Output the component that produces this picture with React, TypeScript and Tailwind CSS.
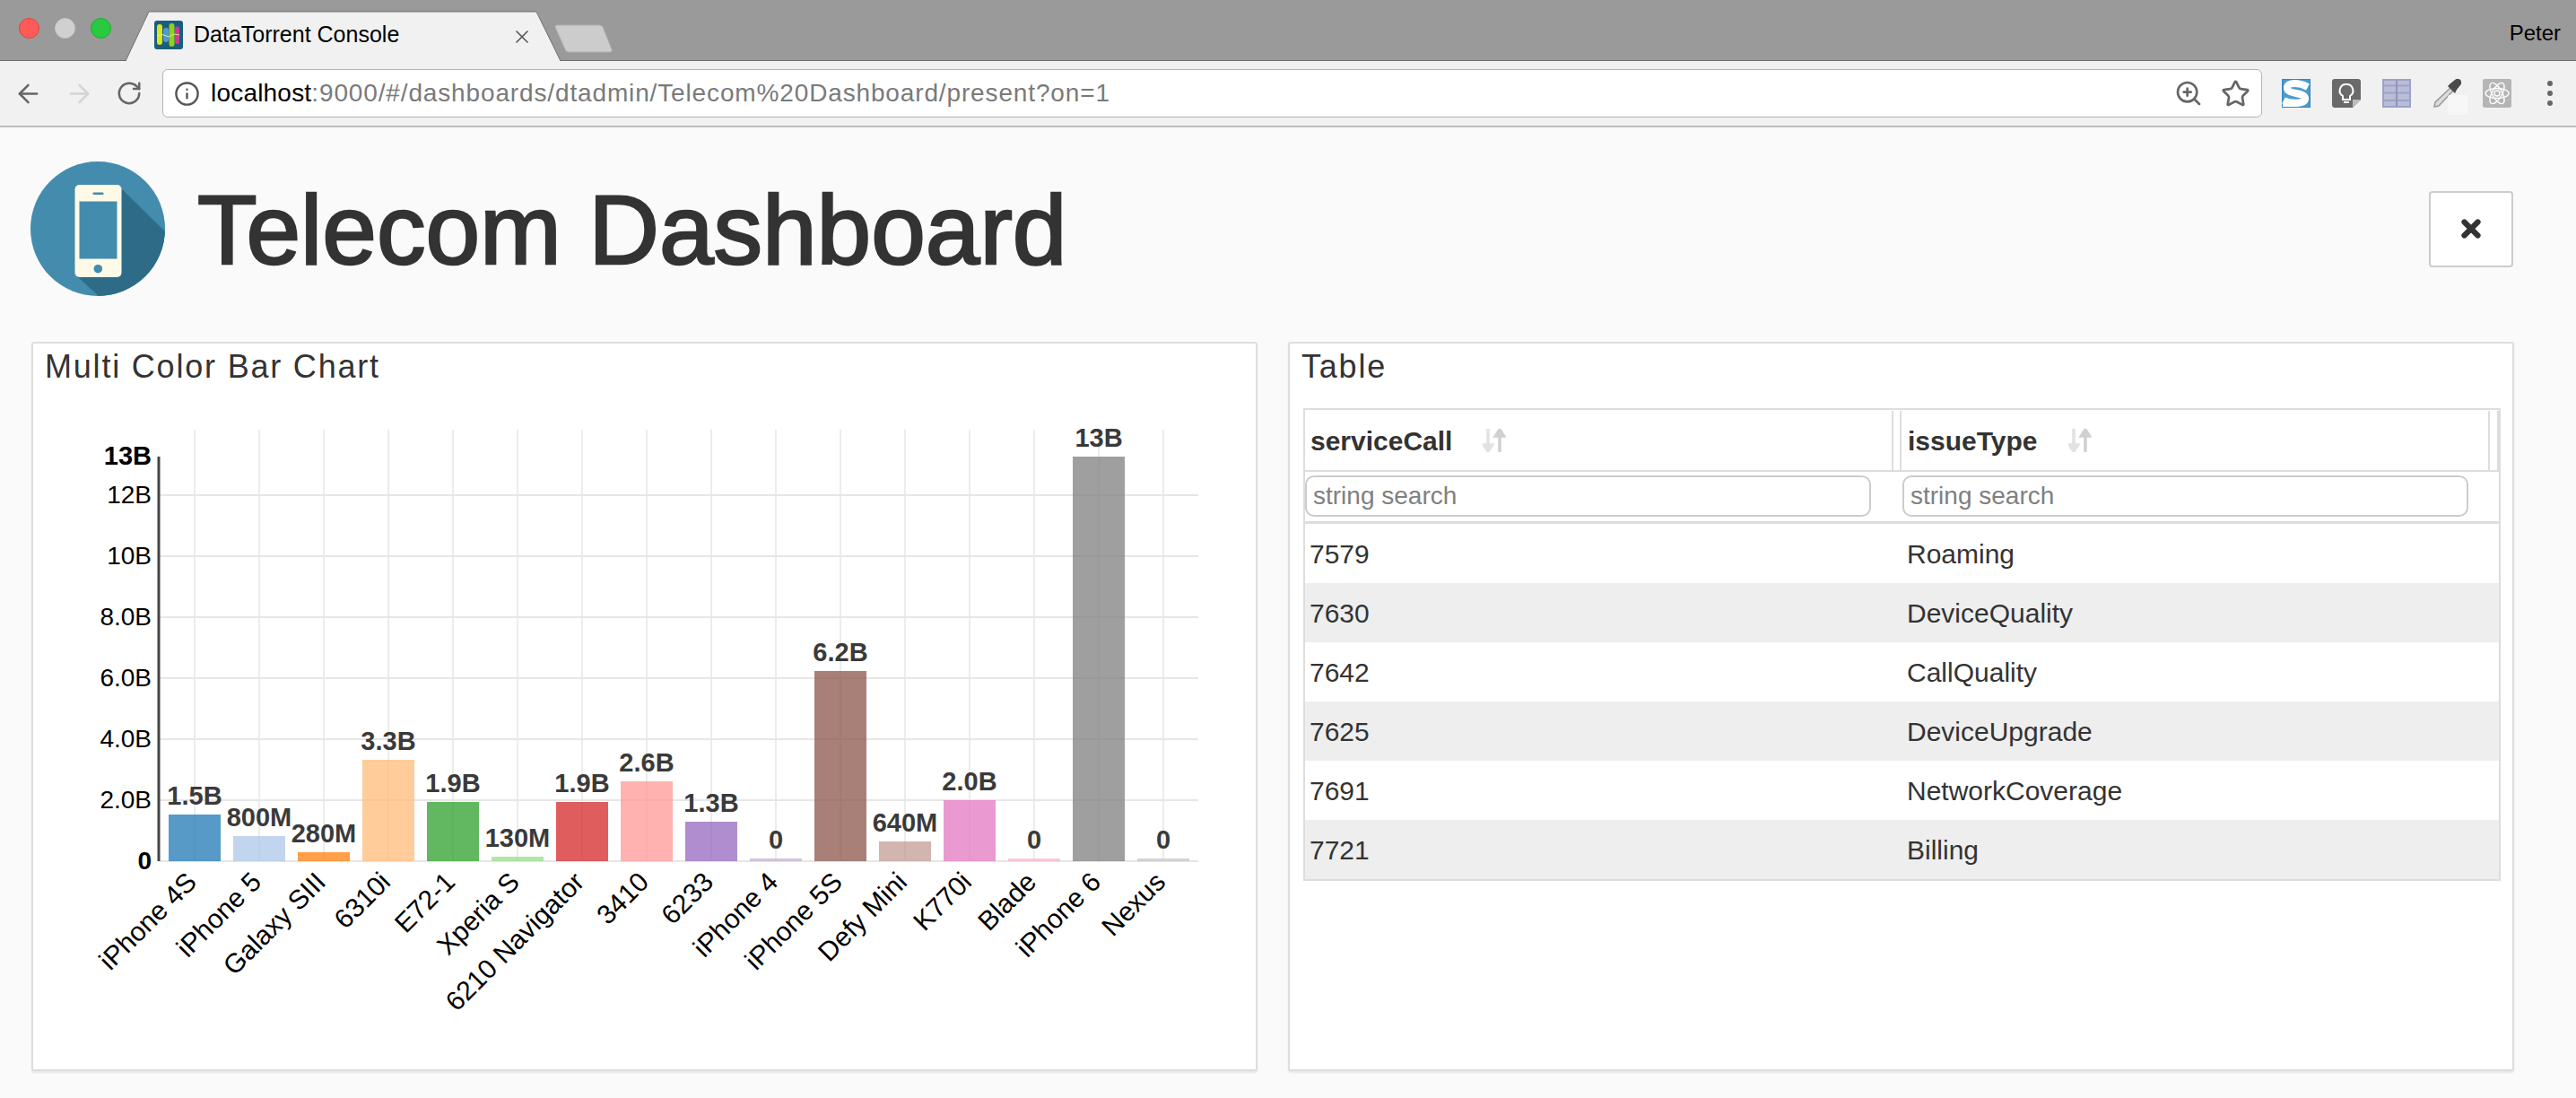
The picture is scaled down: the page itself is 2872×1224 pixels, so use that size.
import React from "react";
import { ArrowLeft, ArrowRight, RotateCw, ZoomIn, Star, Info, X } from "lucide-react";

const bars = [
  { name: "iPhone 4S", label: "1.5B", top: 908, color: "#1f77b4" },
  { name: "iPhone 5", label: "800M", top: 932, color: "#aec7e8" },
  { name: "Galaxy SIII", label: "280M", top: 950, color: "#ff7f0e" },
  { name: "6310i", label: "3.3B", top: 847, color: "#ffbb78" },
  { name: "E72-1", label: "1.9B", top: 894, color: "#2ca02c" },
  { name: "Xperia S", label: "130M", top: 955, color: "#98df8a" },
  { name: "6210 Navigator", label: "1.9B", top: 894, color: "#d62728" },
  { name: "3410", label: "2.6B", top: 871, color: "#ff9896" },
  { name: "6233", label: "1.3B", top: 916, color: "#9467bd" },
  { name: "iPhone 4", label: "0", top: 957, color: "#c5b0d5" },
  { name: "iPhone 5S", label: "6.2B", top: 748, color: "#8c564b" },
  { name: "Defy Mini", label: "640M", top: 938, color: "#c49c94" },
  { name: "K770i", label: "2.0B", top: 892, color: "#e377c2" },
  { name: "Blade", label: "0", top: 957, color: "#f7b6d2" },
  { name: "iPhone 6", label: "13B", top: 509, color: "#7f7f7f" },
  { name: "Nexus", label: "0", top: 957, color: "#c7c7c7" },
];

const yTicks = [
  { label: "12B", y: 552 },
  { label: "10B", y: 620 },
  { label: "8.0B", y: 688 },
  { label: "6.0B", y: 756 },
  { label: "4.0B", y: 824 },
  { label: "2.0B", y: 892 },
];

const rows = [
  ["7579", "Roaming"],
  ["7630", "DeviceQuality"],
  ["7642", "CallQuality"],
  ["7625", "DeviceUpgrade"],
  ["7691", "NetworkCoverage"],
  ["7721", "Billing"],
];

function Favicon() {
  return (
    <svg width="32" height="32" viewBox="0 0 32 32" className="shrink-0">
      <rect width="32" height="32" rx="3" fill="#1c5d7e" />
      <rect x="10" y="8" width="6" height="16" rx="3" fill="#4f9ad6" />
      <rect x="3" y="4" width="6" height="23" rx="3" fill="#d9e61c" />
      <rect x="16.5" y="3" width="6" height="26" rx="3" fill="#93d01e" />
      <rect x="23" y="6.5" width="5" height="19.5" rx="2.5" fill="#d4369a" />
      <path d="M3 17 L9 15.5 L16 18 L22 15 L28 16" fill="none" stroke="#e4f08a" strokeWidth="0.9" />
    </svg>
  );
}

function ExtensionIcons() {
  return (
    <div className="flex items-center gap-[24px] ml-[22px]">
      <svg width="32" height="32" viewBox="0 0 32 32">
        <rect x="0.5" y="0.5" width="31" height="31" fill="#4a9ad0" stroke="#3a86bd" />
        <path d="M29 9 C20 4 6 3 6 10 C6 18 26 14 26 22 C26 28 10 28 2 24" fill="none" stroke="#ffffff" strokeWidth="8" />
        <path d="M1 25 L1 31 H20 L12 27 Z" fill="#ffffff" />
      </svg>
      <svg width="32" height="32" viewBox="0 0 32 32">
        <path d="M3 0 H29 A3 3 0 0 1 32 3 V23 L23 32 H3 A3 3 0 0 1 0 29 V3 A3 3 0 0 1 3 0 Z" fill="#6a6a6a" />
        <path d="M32 23 L23 32 V23 Z" fill="#bdbdbd" />
        <path d="M16 6 A7 7 0 0 0 12 19 V23 H20 V19 A7 7 0 0 0 16 6 Z" fill="none" stroke="#ffffff" strokeWidth="2" />
        <path d="M13 26 H19" stroke="#ffffff" strokeWidth="2" />
      </svg>
      <svg width="32" height="32" viewBox="0 0 32 32">
        <rect width="32" height="32" rx="1" fill="#babdd8" />
        <path d="M0 7.5 H32 M0 15.5 H32 M0 24 H32" stroke="#9da2c6" strokeWidth="2" />
        <path d="M16 0 V32" stroke="#8e94bd" strokeWidth="2" />
        <path d="M0 1 H32 M0 31 H32 M1 0 V32 M31 0 V32" stroke="#9da2c6" strokeWidth="2" />
      </svg>
      <div className="relative w-[32px] h-[32px]">
        <svg width="32" height="32" viewBox="0 0 32 32">
          <path d="M20 10 L3 26 L2 31 L7 30 L23 13 Z" fill="#dcdcdc" stroke="#9a9a9a" strokeWidth="1.5" />
          <path d="M17 8 L25 16 L27 12 L31 7 A4 4 0 0 0 25 1 L20 5 Z" fill="#4a4a4a" />
        </svg>
        <div className="absolute left-[17px] top-[18px] w-[22px] h-[22px] rounded-[2px] bg-[#f7f7f7]" />
      </div>
      <svg width="32" height="32" viewBox="0 0 32 32">
        <rect width="32" height="32" rx="2" fill="#b5b5b5" />
        <g fill="none" stroke="#ffffff" strokeWidth="1.4">
          <ellipse cx="16" cy="16" rx="13" ry="5.5" />
          <ellipse cx="16" cy="16" rx="13" ry="5.5" transform="rotate(60 16 16)" />
          <ellipse cx="16" cy="16" rx="13" ry="5.5" transform="rotate(120 16 16)" />
          <circle cx="16" cy="16" r="3" />
        </g>
      </svg>
      <div className="flex flex-col gap-[5px] ml-[16px]">
        <div className="w-[6px] h-[6px] rounded-full bg-[#666666]" />
        <div className="w-[6px] h-[6px] rounded-full bg-[#666666]" />
        <div className="w-[6px] h-[6px] rounded-full bg-[#666666]" />
      </div>
    </div>
  );
}

function BrowserChrome() {
  return (
    <div>
      <div className="relative flex h-[68px] border-b border-[#6e6e6e] bg-[#9a9a9a]">
        <div className="flex gap-[17px] ml-[21px] mt-[20px]">
          <div className="w-[23px] h-[23px] rounded-full bg-[#fc5b57] border border-[#e0443e]" />
          <div className="w-[23px] h-[23px] rounded-full bg-[#d0d0d0] border border-[#c4c4c4]" />
          <div className="w-[23px] h-[23px] rounded-full bg-[#29c940] border border-[#1fae2f]" />
        </div>
        <div className="relative ml-[16px] mt-[12px] w-[485px] h-[56px]">
          <svg className="absolute inset-0" width="485" height="56" viewBox="0 0 485 56">
            <path d="M0 56 L26 1 H458 L485 56 Z" fill="#f1f1f1" stroke="#6e6e6e" strokeWidth="1" />
            <path d="M1 56 H484" stroke="#f1f1f1" strokeWidth="2" />
          </svg>
          <div className="relative flex items-center h-full pl-[32px] pb-[2px]">
            <Favicon />
            <span className="ml-[12px] text-[25px] text-black whitespace-nowrap">DataTorrent Console</span>
            <X className="absolute left-[430px] top-[17px] text-[#555555]" size={24} strokeWidth={1.6} />
          </div>
        </div>
        <svg className="ml-[-7px] mt-[27px]" width="66" height="32" viewBox="0 0 66 32">
          <path d="M1 3 Q1 1 3 1 H50 Q53 1 54 3 L64 28 Q65 31 62 31 H16 Q13 31 12 28 Z" fill="#cccccc" stroke="#b0b0b0" />
        </svg>
        <span className="absolute right-[17px] top-[19px] text-[24px] text-black">Peter</span>
      </div>
      <div className="flex items-center h-[74px] border-b-2 border-[#bdbdbd] bg-[#f1f1f1]">
        <ArrowLeft className="ml-[15px] text-[#666666]" size={33} strokeWidth={1.8} />
        <ArrowRight className="ml-[24px] text-[#d4d4d4]" size={33} strokeWidth={1.8} />
        <RotateCw className="ml-[24px] text-[#666666]" size={30} strokeWidth={2} />
        <div className="flex items-center ml-[22px] w-[2341px] h-[54px] rounded-[6px] border border-[#b4b4b4] bg-white pl-[12px] pr-[12px]">
          <Info className="text-[#555555]" size={29} strokeWidth={2} />
          <span className="ml-[12px] text-[28px] tracking-[0.86px] text-[#7a7a7a] whitespace-nowrap">
            <span className="tracking-[0.2px] text-black">localhost</span>:9000/#/dashboards/dtadmin/Telecom%20Dashboard/present?on=1
          </span>
          <ZoomIn className="ml-auto text-[#666666]" size={32} strokeWidth={2} />
          <Star className="ml-[20px] text-[#666666]" size={33} strokeWidth={2} />
        </div>
        <ExtensionIcons />
      </div>
    </div>
  );
}

function Logo() {
  return (
    <svg width="150" height="150" viewBox="0 0 150 150" className="shrink-0">
      <defs>
        <clipPath id="logoClip">
          <circle cx="75" cy="75" r="75" />
        </clipPath>
      </defs>
      <circle cx="75" cy="75" r="75" fill="#438cad" />
      <polygon points="101,30 150,78 150,150 76,150 52,128 101,128" fill="#2d6b87" clipPath="url(#logoClip)" />
      <rect x="49.5" y="26" width="52" height="103" rx="5" fill="#fff9e8" />
      <rect x="54.5" y="44.5" width="42" height="64" fill="#438cad" />
      <rect x="69.5" y="34.5" width="12" height="2.5" rx="1" fill="#438cad" />
      <circle cx="75.3" cy="119.7" r="4.8" fill="#438cad" />
    </svg>
  );
}

function BarChart() {
  return (
    <svg width="1363" height="736" viewBox="37 455 1363 736" className="block">
      {bars.map((b, i) => (
        <line key={b.name} x1={217 + 72 * i} x2={217 + 72 * i} y1="479" y2="960" stroke="#ececec" strokeWidth="2" />
      ))}
      {yTicks.map((t) => (
        <line key={t.label} x1="177" x2="1336" y1={t.y} y2={t.y} stroke="#e6e6e6" strokeWidth="2" />
      ))}
      <line x1="177" x2="1336" y1="960" y2="960" stroke="#e6e6e6" strokeWidth="2" />
      <line x1="177" x2="177" y1="509" y2="960" stroke="#444444" strokeWidth="3" />
      <g fontSize="28" textAnchor="end" fill="#000000">
        <text x="169" y="518" fontWeight="700" fontSize="29">13B</text>
        {yTicks.map((t) => (
          <text key={t.label} x="169" y={t.y + 9}>{t.label}</text>
        ))}
        <text x="169" y="969" fontWeight="700">0</text>
      </g>
      {bars.map((b, i) => {
        const cx = 217 + 72 * i;
        return (
          <g key={b.name}>
            <rect x={cx - 29} y={b.top} width="58" height={960 - b.top} fill={b.color} fillOpacity="0.75" />
            <text x={cx} y={b.top - 11} textAnchor="middle" fontSize="29" fontWeight="700" fill="#3a3a3a">{b.label}</text>
            <text transform={`translate(${cx + 4} 985) rotate(-45)`} textAnchor="end" fontSize="30" fill="#000000">{b.name}</text>
          </g>
        );
      })}
    </svg>
  );
}

function SortIcon() {
  return (
    <svg width="26" height="26" viewBox="0 0 26 26" className="ml-[34px]">
      <path d="M6 0 V20 M1.5 18 L6 25 L10.5 18 Z" stroke="#e2e2e2" fill="#e2e2e2" strokeWidth="3.5" strokeLinejoin="miter" />
      <path d="M19 26 V6 M14.5 8 L19 1 L23.5 8 Z" stroke="#d0d0d0" fill="#d0d0d0" strokeWidth="3.5" />
    </svg>
  );
}

function DataTable() {
  return (
    <div className="ml-[15px] mr-[13px] border-2 border-[#dddddd] text-[#333333]">
      <div className="flex h-[69px] border-b-2 border-[#dddddd] text-[30px] font-bold pt-[1px]">
        <div className="flex items-center w-[656px] border-r-2 border-[#dddddd] pl-[6px]">
          serviceCall
          <SortIcon />
        </div>
        <div className="flex items-center w-[658px] ml-[7px] border-x-2 border-[#dddddd] pl-[7px]">
          issueType
          <SortIcon />
        </div>
        <div className="ml-[8px] border-l-2 border-[#dddddd]" />
      </div>
      <div className="flex gap-[35px] h-[58px] border-b-[3px] border-[#dddddd] pt-[4px]">
        <input placeholder="string search" className="w-[631px] h-[46px] rounded-[10px] border-2 border-[#cccccc] bg-white pl-[7px] text-[28px] placeholder:text-[#808080]" />
        <input placeholder="string search" className="w-[631px] h-[46px] rounded-[10px] border-2 border-[#cccccc] bg-white pl-[7px] text-[28px] placeholder:text-[#808080]" />
      </div>
      {rows.map((r, i) => (
        <div key={r[0]} className={`flex items-center h-[66px] pt-[1px] text-[30px] ${i % 2 === 1 ? "bg-[#eeeeee]" : "bg-white"}`}>
          <div className="w-[665px] pl-[5px]">{r[0]}</div>
          <div className="pl-[6px]">{r[1]}</div>
        </div>
      ))}
    </div>
  );
}

function Panel({ title, children }: { title: string; children: React.ReactNode }) {
  return (
    <div className="w-[1367px] h-[813px] rounded-[3px] border-2 border-[#dddddd] bg-white shadow-[0_2px_2px_rgba(0,0,0,0.08)]">
      <h3 className="h-[72px] pl-[13px] pt-[6px] text-[36px] leading-[40px] tracking-[1.8px] text-[#333333]">{title}</h3>
      {children}
    </div>
  );
}

export default function App() {
  return (
    <div className="w-[2872px] h-[1224px] overflow-hidden bg-[#fafafa] font-['Liberation_Sans',Arial,sans-serif]">
      <BrowserChrome />
      <div className="flex items-center h-[150px] mt-[38px] pl-[34px] pr-[70px]">
        <Logo />
        <h1 className="ml-[36px] mt-[3px] text-[109px] font-normal leading-none text-[#333333] [-webkit-text-stroke:2.5px_#333333]">Telecom Dashboard</h1>
        <button className="flex items-center justify-center ml-auto w-[94px] h-[85px] rounded-[4px] border-2 border-[#cccccc] bg-white">
          <X className="text-[#333333]" size={30} strokeWidth={5} />
        </button>
      </div>
      <div className="flex gap-[34px] mt-[51px] pl-[35px]">
        <Panel title="Multi Color Bar Chart">
          <BarChart />
        </Panel>
        <Panel title="Table">
          <DataTable />
        </Panel>
      </div>
    </div>
  );
}
